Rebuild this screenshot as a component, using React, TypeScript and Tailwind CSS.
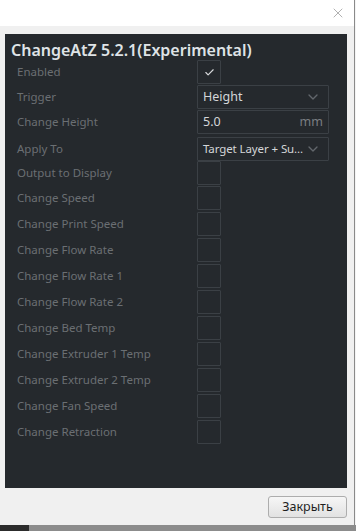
import { Check, ChevronDown, X } from "lucide-react";

type Row = {
  label: string;
  kind: "check" | "select" | "input";
  value?: string;
  checked?: boolean;
  h: string;
};

const rows: Row[] = [
  { label: "Enabled", kind: "check", checked: true, h: "h-[25px]" },
  { label: "Trigger", kind: "select", value: "Height", h: "h-[25px]" },
  { label: "Change Height", kind: "input", value: "5.0", h: "h-[27px]" },
  { label: "Apply To", kind: "select", value: "Target Layer + Su...", h: "h-[24px]" },
  { label: "Output to Display", kind: "check", h: "h-[25px]" },
  { label: "Change Speed", kind: "check", h: "h-[26px]" },
  { label: "Change Print Speed", kind: "check", h: "h-[26px]" },
  { label: "Change Flow Rate", kind: "check", h: "h-[26px]" },
  { label: "Change Flow Rate 1", kind: "check", h: "h-[26px]" },
  { label: "Change Flow Rate 2", kind: "check", h: "h-[26px]" },
  { label: "Change Bed Temp", kind: "check", h: "h-[26px]" },
  { label: "Change Extruder 1 Temp", kind: "check", h: "h-[26px]" },
  { label: "Change Extruder 2 Temp", kind: "check", h: "h-[26px]" },
  { label: "Change Fan Speed", kind: "check", h: "h-[26px]" },
  { label: "Change Retraction", kind: "check", h: "h-[26px]" },
];

function Control({ row }: { row: Row }) {
  if (row.kind === "check") {
    return (
      <div className="w-[24px] h-[24px] border border-[#3b4045] rounded-[1px] flex items-center justify-center">
        {row.checked && <Check size={11} strokeWidth={2.5} className="text-[#d6d8da]" />}
      </div>
    );
  }
  const long = (row.value ?? "").length > 10;
  return (
    <div className="w-[132px] h-[24px] border border-[#3b4045] rounded-[1px] flex items-center pl-[5px] pr-[7px] text-[#d4d6d8]">
      <span className={`flex-1 whitespace-nowrap ${long ? "text-[11.5px] tracking-[-0.1px]" : "text-[12.5px]"}`}>{row.value}</span>
      {row.kind === "select" ? (
        <ChevronDown size={16} strokeWidth={2} className="text-[#62676c] shrink-0" />
      ) : (
        <span className="text-[12.5px] text-[#7a7e82] -mr-[2px]">mm</span>
      )}
    </div>
  );
}

export default function App() {
  return (
    <div className="w-[356px] h-[531px] bg-[#f4f4f4] flex flex-col overflow-hidden" style={{ fontFamily: '"Noto Sans", "Open Sans", sans-serif' }}>
      <div className="flex-1 flex flex-col w-[355px] border-r border-[#8a8a8a]">
        {/* title bar */}
        <div className="h-[26px] bg-white flex items-center justify-end pr-[8px]">
          <X size={16} strokeWidth={1} className="text-[#8a8a8a]" />
        </div>

        <div className="flex-1 bg-[#f0f0f0] flex flex-col pt-[8px] pl-[5px] pr-[7px]">
          {/* dark panel */}
          <div className="h-[454px] bg-[#25292d] pt-[6px]">
            <div className="h-[20px] leading-[20px] pl-[6px] text-[16px] font-semibold text-[#dfe3e6] whitespace-nowrap">
              ChangeAtZ 5.2.1(Experimental)
            </div>
            <div className="flex flex-col">
              {rows.map((r) => (
                <div key={r.label} className={`${r.h} flex items-start`}>
                  <div className="w-[192px] pl-[12px] h-[24px] flex items-center text-[11.5px] text-[#6b6f73] whitespace-nowrap">
                    {r.label}
                  </div>
                  <Control row={r} />
                </div>
              ))}
            </div>
          </div>

          <div className="flex justify-end pt-[8px]">
            <button className="w-[79px] h-[22px] border border-[#adadad] rounded-[3px] bg-gradient-to-b from-[#f6f6f6] to-[#e2e2e2] text-[12.5px] text-[#1e1e1e] leading-none">
              Закрыть
            </button>
          </div>
        </div>
      </div>
      <div className="h-[6px] flex">
        <div className="w-[29px] bg-[#2c2c2c]" />
        <div className="flex-1 bg-[#8c8c8c]" />
      </div>
    </div>
  );
}
